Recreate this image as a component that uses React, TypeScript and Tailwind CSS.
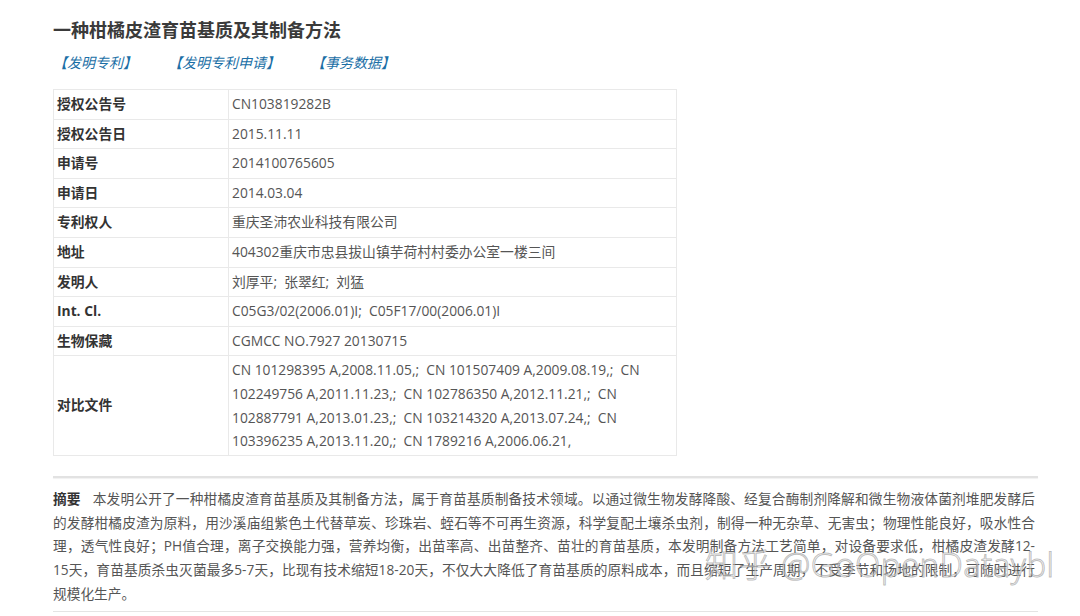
import React from 'react';

const rows: { label: string; value: React.ReactNode }[] = [
  { label: '授权公告号', value: 'CN103819282B' },
  { label: '授权公告日', value: '2015.11.11' },
  { label: '申请号', value: '2014100765605' },
  { label: '申请日', value: '2014.03.04' },
  { label: '专利权人', value: '重庆圣沛农业科技有限公司' },
  { label: '地址', value: '404302重庆市忠县拔山镇芋荷村村委办公室一楼三间' },
  { label: '发明人', value: '刘厚平;  张翠红;  刘猛' },
  { label: 'Int. Cl.', value: 'C05G3/02(2006.01)I;  C05F17/00(2006.01)I' },
  { label: '生物保藏', value: 'CGMCC NO.7927 20130715' },
];

const citations = [
  'CN 101298395 A,2008.11.05,;  CN 101507409 A,2009.08.19,;  CN',
  '102249756 A,2011.11.23,;  CN 102786350 A,2012.11.21,;  CN',
  '102887791 A,2013.01.23,;  CN 103214320 A,2013.07.24,;  CN',
  '103396235 A,2013.11.20,;  CN 1789216 A,2006.06.21,',
];

const abstractLines = [
  '的发酵柑橘皮渣为原料，用沙溪庙组紫色土代替草炭、珍珠岩、蛭石等不可再生资源，科学复配土壤杀虫剂，制得一种无杂草、无害虫；物理性能良好，吸水性合',
  '理，透气性良好；PH值合理，离子交换能力强，营养均衡，出苗率高、出苗整齐、苗壮的育苗基质，本发明制备方法工艺简单，对设备要求低，柑橘皮渣发酵12-',
  '15天，育苗基质杀虫灭菌最多5-7天，比现有技术缩短18-20天，不仅大大降低了育苗基质的原料成本，而且缩短了生产周期，不受季节和场地的限制，可随时进行',
];

export default function App() {
  return (
    <div className="relative w-[1080px] h-[616px] overflow-hidden bg-white font-['Open_Sans','Noto_Sans_CJK_SC',sans-serif] text-[#555]">
      <div className="pl-[53px] pt-[17px] w-[1038px]">
        <h1 className="text-[18px] leading-[26px] font-bold text-[#3a3a3a]">一种柑橘皮渣育苗基质及其制备方法</h1>

        <div className="flex gap-[31px] mt-[10px] text-[14px] leading-[20px] italic text-[#1b6fa6]">
          <span>【发明专利】</span>
          <span>【发明专利申请】</span>
          <span>【事务数据】</span>
        </div>

        <table className="mt-[16px] w-[624px] border-collapse text-[13.8px]">
          <tbody>
            {rows.map((r) => (
              <tr key={r.label} className="h-[29.6px]">
                <td className="w-[175px] border border-[#e9e9e9] pl-[3px] font-bold text-[#333]">{r.label}</td>
                <td className="border border-[#e9e9e9] pl-[3px] whitespace-pre text-[#555]">{r.value}</td>
              </tr>
            ))}
            <tr>
              <td className="border border-[#e9e9e9] pl-[3px] font-bold text-[#333]">对比文件</td>
              <td className="border border-[#e9e9e9] pl-[3px] py-[2px] leading-[23.7px] whitespace-pre text-[#555]">
                {citations.map((c) => (
                  <div key={c}>{c}</div>
                ))}
              </td>
            </tr>
          </tbody>
        </table>

        <div className="mt-[20px] h-[2px] w-[985px] bg-[#e2e2e2] shadow-[0_1px_1px_rgba(0,0,0,0.06)]" />

        <div className="mt-[9px] w-[982px] text-[13.7px] leading-[23.6px] text-[#555]">
          <div className="whitespace-nowrap text-justify [text-align-last:justify]">
            <span className="font-bold text-[#333]">摘要</span>
            <span className="ml-[12px]">本发明公开了一种柑橘皮渣育苗基质及其制备方法，属于育苗基质制备技术领域。以通过微生物发酵降酸、经复合酶制剂降解和微生物液体菌剂堆肥发酵后</span>
          </div>
          {abstractLines.map((l) => (
            <div key={l} className="whitespace-nowrap text-justify [text-align-last:justify]">{l}</div>
          ))}
          <div>规模化生产。</div>
        </div>

        <div className="mt-[6px] h-px w-[985px] bg-[#e4e4e4]" />
      </div>

      <div className="absolute left-[705px] top-[545px] whitespace-nowrap text-[33px] leading-[40px] font-light tracking-[0.5px] text-[rgba(255,255,255,0.55)] [-webkit-text-stroke:1px_rgba(110,110,110,0.45)] pointer-events-none">
        知乎 @GoOpenDataybl
      </div>
    </div>
  );
}
